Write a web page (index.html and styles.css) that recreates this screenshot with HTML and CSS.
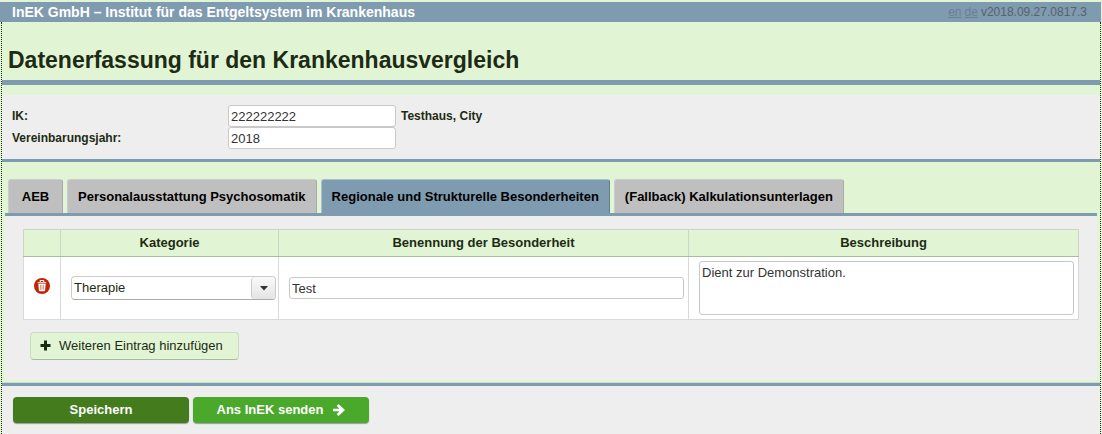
FILE: index.html
```html
<!DOCTYPE html>
<html lang="de">
<head>
<meta charset="utf-8">
<title>Datenerfassung für den Krankenhausvergleich</title>
<link rel="stylesheet" href="styles.css">
</head>
<body>
<header class="topbar">
  <strong class="brand">InEK GmbH – Institut für das Entgeltsystem im Krankenhaus</strong>
  <nav class="meta"><a href="#en">en</a><a href="#de">de</a><span>v2018.09.27.0817.3</span></nav>
</header>
<div class="frame">
  <h1 class="title">Datenerfassung für den Krankenhausvergleich</h1>
  <section class="master">
    <label for="ik">IK:</label>
    <input class="field" id="ik" type="text" value="222222222">
    <span class="hospital">Testhaus, City</span>
    <label for="year">Vereinbarungsjahr:</label>
    <input class="field" id="year" type="text" value="2018">
  </section>
  <main class="content">
    <div class="tabs" role="tablist">
      <button class="tab" role="tab" type="button">AEB</button>
      <button class="tab" role="tab" type="button">Personalausstattung Psychosomatik</button>
      <button class="tab active" role="tab" type="button" aria-selected="true">Regionale und Strukturelle Besonderheiten</button>
      <button class="tab" role="tab" type="button">(Fallback) Kalkulationsunterlagen</button>
    </div>
    <section class="panel">
      <table class="grid">
        <colgroup><col class="c-del"><col class="c-cat"><col class="c-name"><col></colgroup>
        <thead>
          <tr><th></th><th>Kategorie</th><th>Benennung der Besonderheit</th><th>Beschreibung</th></tr>
        </thead>
        <tbody>
          <tr>
            <td class="del">
              <button class="trash" type="button" aria-label="Löschen">
                <svg width="16" height="16" viewBox="0 0 16 16"><circle cx="8" cy="8" r="8" fill="#bd2505"/><path d="M6.2 4V3.1q0-.6.6-.6h2.4q.6 0 .6.6V4M3.7 4.7h8.6" fill="none" stroke="#fff" stroke-width="1.1"/><path d="M4.300 5.800h7.400l-.6 6.400q-.1 1-1.100 1H6q-1 0-1.100-1z" fill="#fff"/><path d="M6.500 6.800v5M8 6.800v5M9.500 6.800v5" stroke="#d66a55" stroke-width=".7"/></svg>
              </button>
            </td>
            <td class="cat">
              <div class="combo">
                <select class="select" aria-label="Kategorie"><option>Therapie</option></select>
                <span class="arrow"><svg width="8" height="5" viewBox="0 0 8 5"><path d="M0 0h8L4 4.500z" fill="#333"/></svg></span>
              </div>
            </td>
            <td><input class="field name" type="text" value="Test" aria-label="Benennung der Besonderheit"></td>
            <td><textarea class="field note" aria-label="Beschreibung">Dient zur Demonstration.</textarea></td>
          </tr>
        </tbody>
      </table>
      <button class="btn add" type="button">
        <svg width="11" height="13" viewBox="0 0 11 13"><path d="M4 .5h3V4h3.500v3H7v3.500H4V7H.5V4H4z" fill="#1d2b14"/></svg>
        Weiteren Eintrag hinzufügen
      </button>
    </section>
  </main>
  <footer class="actions">
    <button class="btn save" type="button">Speichern</button>
    <button class="btn send" type="button">Ans InEK senden
      <svg width="12" height="12" viewBox="0 0 12 12"><path d="M0 4.700H6.400L4 2.300Q3.600 1.800 4 1.400L5 .4Q5.500 0 6 .4L11.500 5.500Q12 6 11.500 6.500L6 11.600Q5.500 12 5 11.600L4 10.600Q3.600 10.200 4 9.700L6.400 7.300H0z" fill="#fff"/></svg>
    </button>
  </footer>
</div>
</body>
</html>
```
FILE: styles.css
```css
* { box-sizing: border-box; }
body {
  margin: 0;
  padding-top: 2px;
  min-height: 100vh;
  display: flex;
  flex-direction: column;
  background: #e1f5d5;
  color: #1d2b14;
  font: 13px/16px "Liberation Sans", Arial, sans-serif;
}
button, input, select, textarea { font: inherit; color: inherit; }
button { cursor: pointer; }
.topbar {
  display: flex;
  justify-content: space-between;
  align-items: center;
  height: 20px;
  padding: 0 14px 0 12px;
  margin-right: 1px;
  background: #7f9bb0;
  color: #fff;
}
.brand { font-size: 14px; }
.meta { display: flex; gap: 3px; font-size: 12px; color: #56626e; }
.meta a { color: #6c7f92; }
.frame {
  flex: 1;
  display: flex;
  flex-direction: column;
  margin: 0 1px;
  border: 1px dotted #1d2b14;
  border-width: 0 1px;
}
.title {
  margin: 0 0 10px;
  padding: 24px 6px 6px;
  border-bottom: 5px solid #7f9bb0;
  font-size: 23px;
  line-height: 28px;
  font-weight: bold;
}
.master {
  display: grid;
  grid-template-columns: 216px 168px auto;
  justify-content: start;
  align-items: center;
  padding: 10px;
  background: #eee;
  border-bottom: 3px solid #7f9bb0;
  font-size: 12px;
  font-weight: bold;
}
.hospital { padding-left: 5px; }
.field {
  width: 100%;
  height: 22px;
  padding: 0 2px;
  border: 1px solid #c9c9c9;
  border-radius: 3px;
  background: #fff;
  color: #333;
  font-size: 13px;
  font-weight: normal;
  display: block;
}
.content { padding: 17px 3px 2px; border-bottom: 1px solid #d3dcd2; }
.tabs {
  display: flex;
  gap: 4px;
  padding: 0 3px;
  border-bottom: 3px solid #7f9bb0;
}
.tab {
  height: 34px;
  min-width: 55px;
  padding: 0 10px;
  border: 1px solid #ccc;
  border-right-color: #aaa;
  border-bottom: 0;
  border-radius: 3px 3px 0 0;
  background: #bfbfbf;
  color: #000;
  font-weight: bold;
}
.tab.active { background: #7f9bb0; border-color: #aabfcd #617f91 #7f9bb0 #aabfcd; }
.panel { padding: 13px 18px 20px; background: #eee; }
.grid {
  width: 100%;
  table-layout: fixed;
  border-collapse: collapse;
  background: #fff;
}
.c-del { width: 37px; }
.c-cat { width: 218px; }
.c-name { width: 410px; }
.grid th {
  height: 27px;
  padding: 0;
  border: 1px solid #ccd6c6;
  border-bottom-color: #a9bba1;
  background: #e1f5d5;
}
.grid td { height: 62px; padding: 4px 4px 4px 10px; border: 1px solid #d9d9d9; }
.grid .del { padding: 0; text-align: center; }
.grid .cat { padding-right: 2px; }
.trash { width: 16px; height: 16px; padding: 0; border: 0; background: none; border-radius: 50%; }
.trash svg { display: block; }
.combo {
  display: flex;
  height: 24px;
  border: 1px solid #ccc;
  border-bottom-color: #aaa;
  border-radius: 4px;
  background: #fff;
  position: relative;
}
.select {
  appearance: none;
  flex: 1;
  padding: 0 26px 0 2px;
  border: 0;
  background: none;
}
.arrow {
  position: absolute;
  inset: 0 0 0 auto;
  width: 24px;
  display: grid;
  place-items: center;
  border-left: 1px solid #ccc;
  border-radius: 4px;
  background: linear-gradient(#fafafa, #e4e4e4);
  pointer-events: none;
}
.grid .note { height: 54px; padding: 3px 2px; resize: none; overflow: hidden; }
.btn { display: flex; align-items: center; border-radius: 4px; }
.add {
  gap: 8px;
  height: 28px;
  margin: 12px 0 0 7px;
  padding: 0 15px 0 9px;
  border: 1px solid #c9dcbe;
  border-bottom-color: #a9b8a0;
  background: #e1f5d5;
}
.actions {
  flex: 1;
  display: flex;
  align-items: flex-start;
  gap: 4px;
  padding: 11px;
  border-top: 3px solid #7f9bb0;
  background: #eee;
}
.actions .btn {
  width: 176px;
  height: 26px;
  justify-content: center;
  gap: 10px;
  border: 0;
  color: #fff;
  font-weight: bold;
  box-shadow: 0 1px 1px #999;
}
.save { background: #447b1d; }
.send { background: #4aa82a; }
```
